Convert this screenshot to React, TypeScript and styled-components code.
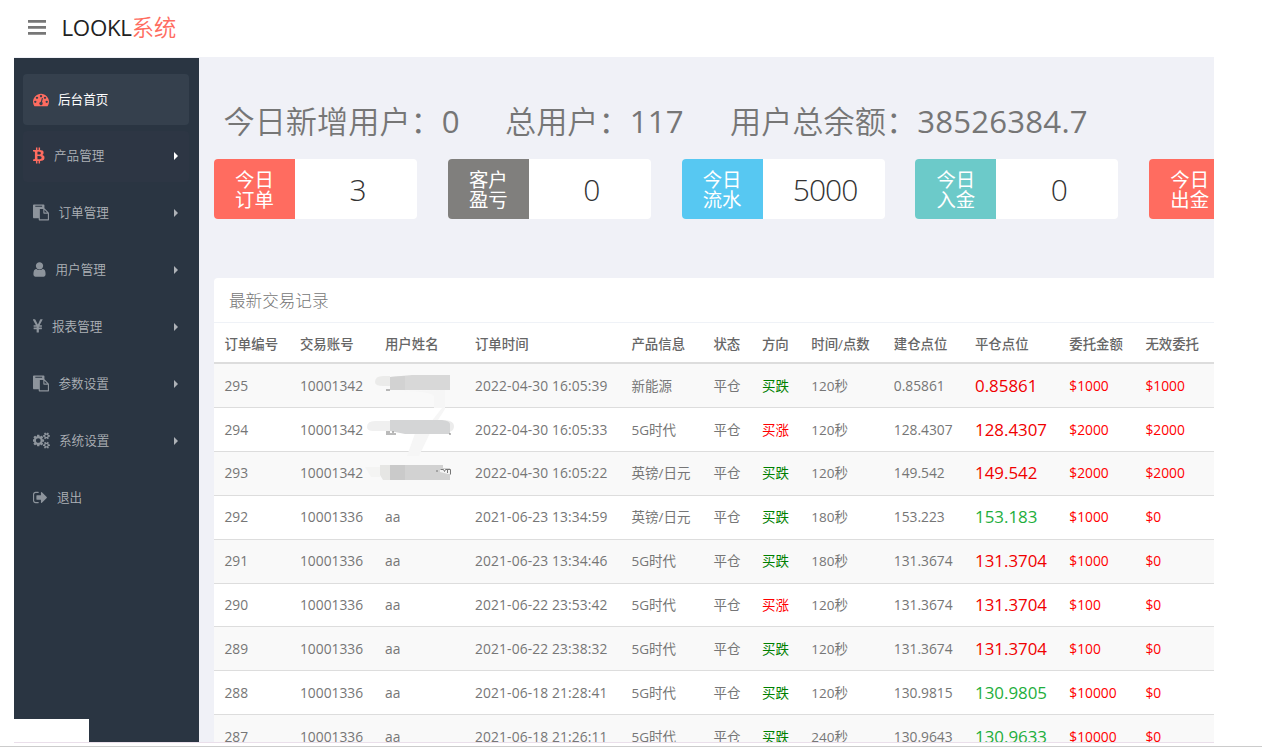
import React from "react";
import styled, { createGlobalStyle } from "styled-components";

const GlobalStyle = createGlobalStyle`
  * { box-sizing: border-box; }
  body {
    margin: 0;
    background: #fff;
    color: #767676;
    font-family: "Open Sans", "Noto Sans CJK SC", sans-serif;
    font-size: 14px;
  }
`;

const Page = styled.div`
  width: 1262px;
  height: 750px;
  overflow: hidden;
  display: flex;
  flex-direction: column;
`;

const TopBar = styled.header`
  height: 57px;
  flex: none;
  display: flex;
  align-items: center;
  padding: 0 0 3px 28px;
`;

const Brand = styled.div`
  margin-left: 15.5px;
  padding-top: 1px;
  font-size: 22.3px;
  line-height: 30px;
  color: #222;
  font-weight: 400;
  letter-spacing: -0.3px;
`;

const BrandAccent = styled.span`
  color: #ff6c60;
  font-weight: 350;
  letter-spacing: 0;
`;

const Body = styled.div`
  display: flex;
  width: 1200px;
  height: 686px;
  margin-left: 14px;
  flex: none;
  background: #f0f1f7;
  overflow: hidden;
  border-bottom: 1px solid #eadfea;
`;

const Sidebar = styled.nav`
  width: 184.6px;
  flex: none;
  margin-top: 1px;
  background: #2a3542;
  display: flex;
  flex-direction: column;
  justify-content: space-between;
`;

const Menu = styled.ul`
  list-style: none;
  margin: 0;
  padding: 16px 10px 0 9px;
  display: flex;
  flex-direction: column;
  gap: 6px;
`;

const MenuItem = styled.li<{ $bg?: string; $color?: string }>`
  height: 50.9px;
  border-radius: 4px;
  display: flex;
  align-items: center;
  padding: 0.3px 11px 0 10px;
  background: ${(p) => p.$bg ?? "transparent"};
  color: ${(p) => p.$color ?? "#aeb2b7"};
  font-size: 12.6px;
`;

const MenuIcon = styled.svg<{ $color?: string }>`
  flex: none;
  height: 17px;
  margin-bottom: 1px;
  fill: ${(p) => p.$color ?? "#8d949c"};
`;

const MenuLabel = styled.span<{ $strong?: boolean }>`
  font-weight: ${(p) => (p.$strong ? 400 : 350)};
  flex: 1;
  line-height: 20px;
`;

const Arrow = styled.i<{ $color?: string }>`
  border: solid transparent;
  border-width: 4px 0 4px 4.5px;
  border-left-color: ${(p) => p.$color ?? "#aeb2b7"};
`;

const StatusPatch = styled.div`
  width: 75px;
  height: 23px;
  background: #fff;
`;

const Main = styled.main`
  flex: 1;
  min-width: 0;
  padding-left: 15.4px;
  overflow: hidden;
`;

const Totals = styled.div`
  display: flex;
  height: 102px;
  padding: 42px 0 0 9.5px;
  font-size: 31.2px;
  line-height: 44px;
  color: #767676;
  white-space: nowrap;
`;

const Total = styled.div<{ $width: number }>`
  width: ${(p) => p.$width}px;
  flex: none;
  font-weight: 350;
`;

const Figure = styled.span`
  font-weight: 400;
  letter-spacing: 0.2px;
`;

const Cards = styled.div`
  display: flex;
  gap: 30.8px;
`;

const Card = styled.section`
  display: flex;
  width: 203px;
  height: 60px;
  flex: none;
  background: #fff;
  border-radius: 4px;
  overflow: hidden;
`;

const CardLabel = styled.div<{ $bg: string }>`
  width: 81px;
  flex: none;
  background: ${(p) => p.$bg};
  color: #fff;
  display: flex;
  flex-direction: column;
  justify-content: center;
  align-items: center;
  font-size: 19.4px;
  line-height: 20px;
  padding-top: 2px;
`;

const CardValue = styled.div`
  flex: 1;
  padding-left: 3px;
  text-align: center;
  font-size: 30px;
  line-height: 62px;
  font-weight: 300;
  letter-spacing: -1px;
  color: #333;
`;

const Panel = styled.section`
  position: relative;
  margin-top: 59px;
  background: #fff;
  border-radius: 4px 0 0 0;
`;

const PanelTitle = styled.h2`
  margin: 0;
  height: 45px;
  padding-left: 15px;
  border-bottom: 1px solid #eff2f7;
  font-size: 16.6px;
  line-height: 46px;
  font-weight: 300;
`;

const Table = styled.table`
  width: 1000px;
  border-collapse: separate;
  border-spacing: 0;
  table-layout: fixed;
  white-space: nowrap;
`;

const HeadCell = styled.th`
  height: 41px;
  padding: 0;
  text-align: left;
  font-size: 13.4px;
  font-weight: 500;
  color: #666;
  border-bottom: 2px solid #ddd;
  &:first-child { padding-left: 10.5px; }
`;

const Row = styled.tr`
  &:nth-child(odd) { background: #f9f9f9; }
`;

const Cell = styled.td<{ $color?: string; $size?: number; $spacing?: number }>`
  height: 43.92px;
  padding: 0.3px 0 0;
  border-bottom: 1px solid #ddd;
  color: ${(p) => p.$color ?? "inherit"};
  font-size: ${(p) => p.$size ?? 13.8}px;
  letter-spacing: ${(p) => p.$spacing ?? 0}px;
  line-height: 20px;
  &:first-child { padding-left: 10.5px; }
`;

const Cjk = styled.span`
  font-size: 13.5px;
`;

const Redaction = styled.svg`
  position: absolute;
  left: 151px;
  top: 87px;
`;

const BottomRule = styled.div`
  margin-top: 3px;
  height: 1px;
  flex: none;
  background: #ccc;
`;

const ICONS = {
  dashboard:
    "M384 1152q0-53-37.500-90.500t-90.500-37.500-90.500 37.500-37.500 90.500 37.500 90.500 90.500 37.500 90.500-37.500 37.500-90.500zm192-448q0-53-37.500-90.500t-90.500-37.500-90.500 37.500-37.500 90.500 37.500 90.500 90.500 37.500 90.500-37.500 37.500-90.500zm428 481l101-382q6-26-7.500-48.500t-38.500-29.500-48 6.500-30 39.500l-101 382q-60 5-107 43.500t-63 98.500q-20 77 20 146t117 89 146-20 89-117q16-60-6-117t-72-91zm660-33q0-53-37.500-90.500t-90.500-37.500-90.500 37.500-37.500 90.500 37.500 90.500 90.500 37.500 90.500-37.500 37.500-90.500zm-640-640q0-53-37.500-90.500t-90.500-37.500-90.500 37.500-37.500 90.500 37.500 90.500 90.500 37.500 90.500-37.500 37.500-90.500zm448 192q0-53-37.500-90.500t-90.500-37.500-90.500 37.500-37.500 90.500 37.500 90.500 90.500 37.500 90.500-37.500 37.500-90.500zm320 448q0 261-141 483-19 29-54 29h-1402q-35 0-54-29-141-221-141-483 0-182 71-348t191-286 286-191 348-71 348 71 286 191 191 286 71 348z",
  bitcoin:
    "M1217 739q18 182-131 258 117 28 175 103t45 214q-7 71-32.500 125t-64.500 89-97 58.500-121.500 34.500-145.500 15v255h-154v-251q-80 0-122-1v252h-154v-255q-18 0-54-.5t-55-.5h-200l31-183h111q50 0 58-51v-402h16q-6-1-16-1v-287q-13-68-89-68h-111v-164l212 1q64 0 97-1v-252h154v247q82-2 122-2v-245h154v252q79 7 140 22.500t113 45 82.500 78 36.500 114.500zm-215 545q0-36-15-64t-37-46-57.500-30.500-65.500-18.500-74-9-69-3-64.500 1-47.500 1v338q8 0 37 .5t48 .5 53-1.500 58.500-4 57-8.500 55.500-14 47.500-21 39.500-30 24.500-40 9.500-51zm-71-476q0-33-12.500-58.500t-30.500-42-48-28-55-16.500-61.500-8-58-2.500-54 1-39.500.5v307q5 0 34.500.5t46.500 0 50-2 55-5.500 51.500-11 48.500-18.500 37-27 27-38.500 9-51z",
  paste:
    "M768 1664h896v-640h-416q-40 0-68-28t-28-68v-416h-384v1152zm256-1440v-64q0-13-9.500-22.500t-22.500-9.500h-704q-13 0-22.500 9.500t-9.500 22.500v64q0 13 9.500 22.500t22.500 9.500h704q13 0 22.500-9.500t9.500-22.500zm256 672h299l-299-299v299zm512 128v672q0 40-28 68t-68 28h-960q-40 0-68-28t-28-68v-160h-544q-40 0-68-28t-28-68v-1344q0-40 28-68t68-28h1088q40 0 68 28t28 68v328q21 13 36 28l408 408q28 28 48 76t20 88z",
  user:
    "M1536 1399q0 109-62.500 187t-150.500 78h-854q-88 0-150.500-78t-62.500-187q0-85 8.500-160.500t31.500-152 58.500-131 94-89 134.500-34.500q131 128 313 128t313-128q76 0 134.500 34.500t94 89 58.500 131 31.500 152 8.500 160.500zm-256-887q0 159-112.500 271.500t-271.500 112.500-271.500-112.500-112.500-271.500 112.500-271.500 271.500-112.500 271.500 112.500 112.500 271.500z",
  yen:
    "M985.500 1536h-172q-13 0-22.500-9t-9.500-23v-330h-288q-13 0-22.500-9t-9.500-23v-103q0-13 9.500-22.500t22.500-9.500h288v-85h-288q-13 0-22.500-9t-9.500-23v-104q0-13 9.500-22.500t22.500-9.500h214l-321-578q-8-16 0-32 10-16 28-16h194q19 0 29 18l215 425q19 38 56 125 10-24 30.500-68t27.500-61l191-420q8-19 29-19h191q17 0 27 16 9 14 1 31l-313 579h215q13 0 22.500 9.500t9.500 22.500v104q0 14-9.500 23t-22.500 9h-290v85h290q13 0 22.500 9.500t9.500 22.500v103q0 14-9.500 23t-22.500 9h-290v330q0 13-9.500 22.500t-22.500 9.500z",
  cogs:
    "M832 896q0-106-75-181t-181-75-181 75-75 181 75 181 181 75 181-75 75-181zm768 512q0-52-38-90t-90-38-90 38-38 90q0 53 37.500 90.500t90.500 37.500 90.500-37.500 37.500-90.500zm0-1024q0-52-38-90t-90-38-90 38-38 90q0 53 37.500 90.500t90.500 37.500 90.500-37.500 37.500-90.500zm-384 421v185q0 10-7 19.500t-16 10.500l-155 24q-11 35-32 76 34 48 90 115 7 11 7 20 0 12-7 19-23 30-82.500 89.500t-78.500 59.500q-11 0-21-7l-115-90q-37 19-77 31-11 108-23 155-7 24-30 24h-186q-11 0-20-7.500t-10-17.500l-23-153q-34-10-75-31l-118 89q-7 7-20 7-11 0-21-8-144-133-144-160 0-9 7-19 10-14 41-53t47-61q-23-44-35-82l-152-24q-10-1-17-9.500t-7-19.500v-185q0-10 7-19.500t16-10.500l155-24q11-35 32-76-34-48-90-115-7-11-7-20 0-12 7-20 22-30 82-89t79-59q11 0 21 7l115 90q34-18 77-32 11-108 23-154 7-24 30-24h186q11 0 20 7.500t10 17.500l23 153q34 10 75 31l118-89q8-7 20-7 11 0 21 8 144 133 144 160 0 8-7 19-12 16-42 54t-45 60q23 48 34 82l152 23q10 2 17 10.500t7 19.500zm640 533v140q0 16-149 31-12 27-30 52 51 113 51 138 0 4-4 7-122 71-124 71-8 0-46-47t-52-68q-20 2-30 2t-30-2q-14 21-52 68t-46 47q-2 0-124-71-4-3-4-7 0-25 51-138-18-25-30-52-149-15-149-31v-140q0-16 149-31 13-29 30-52-51-113-51-138 0-4 4-7 4-2 35-20t59-34 30-16q8 0 46 46.500t52 67.500q20-2 30-2t30 2q51-71 92-112l6-2q4 0 124 70 4 3 4 7 0 25-51 138 17 23 30 52 149 15 149 31zm0-1024v140q0 16-149 31-12 27-30 52 51 113 51 138 0 4-4 7-122 71-124 71-8 0-46-47t-52-68q-20 2-30 2t-30-2q-14 21-52 68t-46 47q-2 0-124-71-4-3-4-7 0-25 51-138-18-25-30-52-149-15-149-31v-140q0-16 149-31 13-29 30-52-51-113-51-138 0-4 4-7 4-2 35-20t59-34 30-16q8 0 46 46.500t52 67.500q20-2 30-2t30 2q51-71 92-112l6-2q4 0 124 70 4 3 4 7 0 25-51 138 17 23 30 52 149 15 149 31z",
  signOut:
    "M704 1440q0 4 1 20t.5 26.500-3 23.500-10 19.500-20.500 6.500h-320q-119 0-203.500-84.500t-84.500-203.500v-704q0-119 84.500-203.500t203.500-84.500h320q13 0 22.500 9.500t9.500 22.500q0 4 1 20t.5 26.500-3 23.500-10 19.500-20.500 6.500h-320q-66 0-113 47t-47 113v704q0 66 47 113t113 47h312l11.500 1 11.500 3 8 5.500 7 9 2 13.500zm928-544q0 26-19 45l-544 544q-19 19-45 19t-45-19-19-45v-288h-448q-26 0-45-19t-19-45v-384q0-26 19-45t45-19h448v-288q0-26 19-45t45-19 45 19l544 544q19 19 19 45z",
};

type IconName = keyof typeof ICONS;

/* Each icon is cropped to its own ink: [x, y, width, height] in its path's units. */
const BOX: Record<IconName, [number, number, number, number]> = {
  dashboard: [0, 0, 1792, 1792],
  bitcoin: [106, 227, 1204, 1664],
  paste: [0, 0, 1792, 1792],
  user: [256, 0, 1280, 1792],
  yen: [400, 0, 1000, 1792],
  cogs: [0, 0, 1860, 1792],
  signOut: [64, 0, 1580, 1792],
};

const Icon = ({ name, width, color }: { name: IconName; width: number; color?: string }) => (
  <MenuIcon $color={color} width={width} viewBox={BOX[name].join(" ")}>
    <path d={ICONS[name]} />
  </MenuIcon>
);

interface MenuEntry {
  icon: IconName;
  width: number;
  gap: number;
  label: string;
  bg?: string;
  color?: string;
  accent?: string;
  leaf?: boolean;
}

const MENU: MenuEntry[] = [
  { icon: "dashboard", width: 16, gap: 9, label: "后台首页", bg: "#35404d", color: "#fff", accent: "#ff6c60", leaf: true },
  { icon: "bitcoin", width: 11.5, gap: 9.5, label: "产品管理", bg: "#2d3644", accent: "#ff6c60" },
  { icon: "paste", width: 16, gap: 9.5, label: "订单管理" },
  { icon: "user", width: 13, gap: 9.5, label: "用户管理" },
  { icon: "yen", width: 9.5, gap: 9.5, label: "报表管理" },
  { icon: "paste", width: 16, gap: 9.5, label: "参数设置" },
  { icon: "cogs", width: 17, gap: 9, label: "系统设置" },
  { icon: "signOut", width: 14, gap: 10, label: "退出", leaf: true },
];

const IconGap = styled.span<{ $width: number }>`
  width: ${(p) => p.$width}px;
  flex: none;
`;

const CARDS = [
  { a: "今日", b: "订单", bg: "#ff6c60", value: "3" },
  { a: "客户", b: "盈亏", bg: "#807f7d", value: "0" },
  { a: "今日", b: "流水", bg: "#57c8f2", value: "5000" },
  { a: "今日", b: "入金", bg: "#6ccac9", value: "0" },
  { a: "今日", b: "出金", bg: "#ff6c60", value: "" },
];

const COLUMNS: [string, number][] = [
  ["订单编号", 86],
  ["交易账号", 85],
  ["用户姓名", 90],
  ["订单时间", 156.5],
  ["产品信息", 82],
  ["状态", 48.5],
  ["方向", 49.3],
  ["时间/点数", 82.5],
  ["建仓点位", 81.2],
  ["平仓点位", 94.3],
  ["委托金额", 76.2],
  ["无效委托", 68.5],
];

const RED = "#f00000";
const GREEN = "#1eae3c";

const ROWS = [
  ["295", "10001342", "", "2022-04-30 16:05:39", "新能源", "买跌", "120秒", "0.85861", "0.85861", RED, "$1000", "$1000"],
  ["294", "10001342", "", "2022-04-30 16:05:33", "5G时代", "买涨", "120秒", "128.4307", "128.4307", RED, "$2000", "$2000"],
  ["293", "10001342", "", "2022-04-30 16:05:22", "英镑/日元", "买跌", "120秒", "149.542", "149.542", RED, "$2000", "$2000"],
  ["292", "10001336", "aa", "2021-06-23 13:34:59", "英镑/日元", "买跌", "180秒", "153.223", "153.183", GREEN, "$1000", "$0"],
  ["291", "10001336", "aa", "2021-06-23 13:34:46", "5G时代", "买跌", "180秒", "131.3674", "131.3704", RED, "$1000", "$0"],
  ["290", "10001336", "aa", "2021-06-22 23:53:42", "5G时代", "买涨", "120秒", "131.3674", "131.3704", RED, "$100", "$0"],
  ["289", "10001336", "aa", "2021-06-22 23:38:32", "5G时代", "买跌", "120秒", "131.3674", "131.3704", RED, "$100", "$0"],
  ["288", "10001336", "aa", "2021-06-18 21:28:41", "5G时代", "买跌", "120秒", "130.9815", "130.9805", GREEN, "$10000", "$0"],
  ["287", "10001336", "aa", "2021-06-18 21:26:11", "5G时代", "买跌", "240秒", "130.9643", "130.9633", GREEN, "$10000", "$0"],
];

export default function App() {
  return (
    <Page>
      <GlobalStyle />
      <TopBar>
        <svg width="18" height="15" viewBox="0 0 18 15" fill="#777">
          <path d="M0 0h18v2.800H0zM0 6h18v2.800H0zM0 12h18v2.800H0z" />
        </svg>
        <Brand>
          LOOKL<BrandAccent>系统</BrandAccent>
        </Brand>
      </TopBar>
      <Body>
        <Sidebar>
          <Menu>
            {MENU.map((m) => (
              <MenuItem key={m.label} $bg={m.bg} $color={m.color}>
                <Icon name={m.icon} width={m.width} color={m.accent} />
                <IconGap $width={m.gap} />
                <MenuLabel $strong={m.color === "#fff"}>{m.label}</MenuLabel>
                {!m.leaf && <Arrow $color={m.bg ? "#fff" : undefined} />}
              </MenuItem>
            ))}
          </Menu>
          <StatusPatch />
        </Sidebar>
        <Main>
          <Totals>
            <Total $width={281.5}>今日新增用户：<Figure>0</Figure></Total>
            <Total $width={225}>总用户：<Figure>117</Figure></Total>
            <Total $width={400}>用户总余额：<Figure>38526384.7</Figure></Total>
          </Totals>
          <Cards>
            {CARDS.map((c) => (
              <Card key={c.b}>
                <CardLabel $bg={c.bg}>
                  <span>{c.a}</span>
                  <span>{c.b}</span>
                </CardLabel>
                <CardValue>{c.value}</CardValue>
              </Card>
            ))}
          </Cards>
          <Panel>
            <PanelTitle>最新交易记录</PanelTitle>
            <Table>
              <colgroup>
                {COLUMNS.map(([name, w]) => (
                  <col key={name} style={{ width: w }} />
                ))}
              </colgroup>
              <thead>
                <tr>
                  {COLUMNS.map(([name]) => (
                    <HeadCell key={name}>{name}</HeadCell>
                  ))}
                </tr>
              </thead>
              <tbody>
                {ROWS.map(([id, account, user, time, product, side, span, open, close, tone, amount, invalid]) => (
                  <Row key={id}>
                    <Cell>{id}</Cell>
                    <Cell>{account}</Cell>
                    <Cell>{user}</Cell>
                    <Cell $spacing={0.13}>{time}</Cell>
                    <Cell><Cjk>{product}</Cjk></Cell>
                    <Cell><Cjk>平仓</Cjk></Cell>
                    <Cell $color={side === "买涨" ? "#f00" : "#008000"}><Cjk>{side}</Cjk></Cell>
                    <Cell><Cjk>{span}</Cjk></Cell>
                    <Cell>{open}</Cell>
                    <Cell $color={tone} $size={16.9}>{close}</Cell>
                    <Cell $color="#f00">{amount}</Cell>
                    <Cell $color="#f00">{invalid}</Cell>
                  </Row>
                ))}
              </tbody>
            </Table>
            <Redaction width="100" height="125" viewBox="0 0 100 125">
              <path d="M35 26q30 0 34 5v12h8l-11 14H54l-12 34h12l12-25 14-22V25z" fill="#f6f6f6" />
              <path d="M10 17q0-6 8-6h7v10h-7q-8 0-8-4z" fill="#ebebea" />
              <path d="M25 12l22-2h38v15H25z" fill="#d8d8d8" />
              <path d="M25 12l15-1v14H25z" fill="#d2d2d2" />
              <path d="M21 25h4" stroke="#777" />
              <path d="M2 62q0-6 8-6h15v10H8q-6 0-6-4z" fill="#f0f0f0" />
              <path d="M25 55h55q9 1 9 6t-5 6z" fill="#ececec" />
              <path d="M25 55h52q8 1 8 4v10H40l-15-3z" fill="#d4d5d6" />
              <path d="M21 67h4M21 69h10M84 69h2M27 67h2" stroke="#777" />
              <path d="M0 102h15v10H6z" fill="#f4f4f3" />
              <path d="M15 100h10v15h-7l-3-5z" fill="#e6e6e4" />
              <path d="M25 100h53v3h7v12H25z" fill="#d2d2d2" />
              <path d="M25 100h15v15H25z" fill="#cacaca" />
              <path d="M75 104h11v5h-3l-8-2z" fill="#f4f4f4" />
              <path d="M75.500 104.500h3l1 2 1-2h5v5M82.500 105v3M71 106h2" stroke="#777" fill="none" />
            </Redaction>
          </Panel>
        </Main>
      </Body>
      <BottomRule />
    </Page>
  );
}
